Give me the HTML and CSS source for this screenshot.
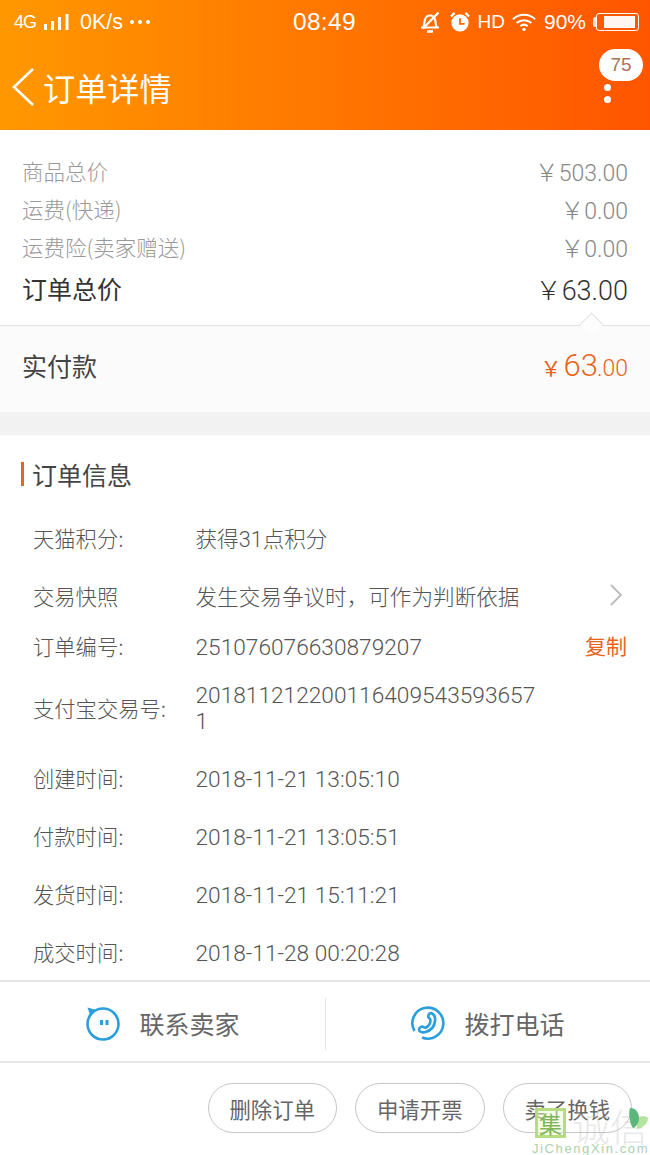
FILE: index.html
```html
<!DOCTYPE html>
<html lang="zh">
<head>
<meta charset="utf-8">
<title>订单详情</title>
<link rel="stylesheet" href="styles.css">
</head>
<body>
<div class="page">
  <header class="header">
    <div class="status">
      <div class="status-left">
        <span class="net">4G</span>
        <svg class="signal" width="26" height="18" viewBox="0 0 26 18"><path d="M1.500 11v6M8.500 8v9M15.500 4v13M23 1v16" stroke="#fff" stroke-width="3" fill="none"/></svg>
        <span class="speed">0K/s</span>
        <span class="dots"><i></i><i></i><i></i></span>
      </div>
      <div class="clock">08:49</div>
      <div class="status-right">
        <svg class="ic-bell" width="20" height="22" viewBox="0 0 20 22" fill="none" stroke="#fff" stroke-width="2.200"><path d="M1 16.500h18M3 16.500c2-3 1-5 2-8 1-3 3-4 5-4s4 1 5 4c1 3 0 5 2 8"/><path d="M7 20.500h6" stroke-width="2.500"/><path d="M18.500 1.500 3 17.500"/></svg>
        <svg class="ic-alarm" width="20" height="20" viewBox="0 0 22 22"><circle cx="11" cy="12" r="9.500" fill="#fff"/><path d="M11 7v6h5" stroke="#f60" stroke-width="2" fill="none"/><path d="M1 5l4-4M21 5l-4-4" stroke="#fff" stroke-width="2.500"/></svg>
        <span class="hd">HD</span>
        <svg class="ic-wifi" width="24" height="19" viewBox="0 0 26 20" fill="none" stroke="#fff" stroke-width="2.300"><path d="M1 6.500c7-6.500 17-6.500 24 0M5 10.500c4.500-4 11.500-4 16 0M9 14c2.500-2 5.500-2 8 0"/><circle cx="13" cy="17.500" r="1.800" fill="#fff" stroke="none"/></svg>
        <span class="pct">90%</span>
        <span class="battery-tip"></span>
        <span class="battery"><span class="battery-fill"></span></span>
      </div>
    </div>
    <div class="titlebar">
      <svg class="back" width="24" height="40" viewBox="0 0 24 40"><path d="M22 2 3 20l19 18" fill="none" stroke="#fff" stroke-width="2.600"/></svg>
      <h1 class="title">订单详情</h1>
      <div class="more">
        <span class="badge">75</span>
        <i></i><i></i>
      </div>
    </div>
  </header>

  <section class="prices">
    <div class="price-row"><span class="lbl">商品总价</span><span class="num"><span class="yen">￥</span>503.00</span></div>
    <div class="price-row"><span class="lbl">运费(快递)</span><span class="num"><span class="yen">￥</span>0.00</span></div>
    <div class="price-row"><span class="lbl">运费险(卖家赠送)</span><span class="num"><span class="yen">￥</span>0.00</span></div>
    <div class="price-row total"><span class="lbl">订单总价</span><span class="num"><span class="yen">￥</span>63.00</span></div>
  </section>

  <section class="paid">
    <span class="notch"></span>
    <span class="paid-label">实付款</span>
    <span class="paid-num"><small>￥</small><b>63</b><small>.00</small></span>
  </section>

  <section class="info">
    <h2 class="info-title">订单信息</h2>
    <div class="row"><span class="key">天猫积分:</span><span class="val">获得31点积分</span></div>
    <div class="row"><span class="key">交易快照</span><span class="val">发生交易争议时，可作为判断依据</span>
      <svg class="chev" width="14" height="22" viewBox="0 0 14 22"><path d="M2 1l10 10L2 21" fill="none" stroke="#bbb" stroke-width="1.800"/></svg>
    </div>
    <div class="row row-short"><span class="key">订单编号:</span><span class="val val-digits">251076076630879207</span><span class="copy">复制</span></div>
    <div class="row row-tall"><span class="key">支付宝交易号:</span><span class="val val-digits val-wrap">2018112122001164095435936571</span></div>
    <div class="row"><span class="key">创建时间:</span><span class="val val-digits">2018-11-21 13:05:10</span></div>
    <div class="row"><span class="key">付款时间:</span><span class="val val-digits">2018-11-21 13:05:51</span></div>
    <div class="row"><span class="key">发货时间:</span><span class="val val-digits">2018-11-21 15:11:21</span></div>
    <div class="row"><span class="key">成交时间:</span><span class="val val-digits">2018-11-28 00:20:28</span></div>
  </section>

  <section class="contact">
    <div class="contact-item">
      <svg width="36" height="36" viewBox="0 0 36 36" fill="none" stroke="#2a9fdc" stroke-width="2.600"><circle cx="18" cy="19" r="15.500"/><path d="M2.500 2.500l9 2.500-6 6z" fill="#2a9fdc" stroke="none"/><path d="M16.500 15v5M22 15v5" stroke-width="3"/></svg>
      <span>联系卖家</span>
    </div>
    <div class="contact-item with-line">
      <svg width="36" height="36" viewBox="0 0 36 36" fill="none" stroke="#2a9fdc" stroke-width="2.600"><path d="M4.500 26A15.500 15.500 0 1 1 12 32.500"/><path d="M21 8c3 1 4.500 4 4 8-.5 5-4 9.500-9.500 11-3.500 1-6.500-.5-6.500-2.500s3-3.500 4.500-2.500c1 .7 1.500 1 2.500.5 3-1.500 4.500-5 4.500-7.500 0-1-.5-1.300-1.500-2-1.500-1.200-.5-5 2-5z"/></svg>
      <span>拨打电话</span>
    </div>
  </section>

  <section class="actions">
    <button class="btn">删除订单</button>
    <button class="btn">申请开票</button>
    <button class="btn">卖了换钱</button>
  </section>

  <div class="watermark">
    <span class="wm-box">集</span>
    <span class="wm-name">诚信</span>
    <svg class="wm-leaf" width="22" height="24" viewBox="0 0 22 24"><path d="M9 12c2-4 8-5 11-2 0 5-5 10-11 11z" fill="#b5e3a0"/><path d="M2 0c6 0 9 5 9 10s-3 9-6 10C2 17 0 5 2 0z" fill="#5bb77a"/></svg>
    <span class="wm-url">JiChengXin.com</span>
  </div>
</div>
</body>
</html>
```
FILE: styles.css
```css
* { box-sizing: border-box; }
html, body { margin: 0; padding: 0; }
body {
  width: 650px;
  height: 1155px;
  overflow: hidden;
  background: #fff;
  font-family: "Liberation Sans", "Noto Sans CJK SC", sans-serif;
  color: #666;
}
.page { position: relative; width: 650px; height: 1155px; overflow: hidden; background: #f2f2f2; display: flex; flex-direction: column; }

.header { height: 130px; flex: none; background: linear-gradient(90deg, #ff9800 0%, #ff7a00 45%, #ff5500 100%); color: #fff; }
.status { height: 44px; display: flex; align-items: center; padding: 0 11px 0 14px; }
.status-left { display: flex; align-items: center; width: 279px; flex: none; }
.net { font-size: 18px; width: 30px; letter-spacing: -1px; }
.speed { font-size: 21.500px; margin-left: 10px; }
.dots { display: flex; gap: 4px; margin-left: 7px; }
.dots i { width: 4px; height: 4px; border-radius: 50%; background: #fff; display: block; }
.clock { font-size: 24.500px; letter-spacing: .3px; }
.status-right { display: flex; align-items: center; margin-left: auto; }
.ic-alarm { margin-left: 10px; }
.hd { font-size: 19px; margin-left: 8px; }
.ic-wifi { margin-left: 7px; }
.pct { font-size: 21px; margin-left: 8px; }
.battery-tip { width: 3px; height: 10px; background: #fff; opacity: .8; border-radius: 2px 0 0 2px; margin-left: 7px; }
.battery { width: 43px; height: 18px; border: 1.500px solid #fff; border-radius: 3px; padding: 2px 3px; display: flex; justify-content: flex-end; opacity: .95; }
.battery-fill { display: block; width: 31px; height: 100%; background: #fff; }

.titlebar { height: 86px; display: flex; align-items: center; padding: 0 0 0 11px; }
.back { margin-right: 9px; }
.title { margin: 0 0 0 -1px; font-size: 32.200px; font-weight: 400; font-family: "Noto Sans CJK SC", sans-serif; line-height: 1; }
.more { margin-left: auto; width: 14px; margin-right: 36px; display: flex; flex-direction: column; align-items: center; gap: 5px; position: relative; height: 86px; padding-top: 40px; }
.more i { width: 7px; height: 7px; border-radius: 50%; background: #fff; display: block; flex: none; }
.badge { position: absolute; top: 5px; left: -1px; width: 44px; height: 32px; border-radius: 16px; background: #fff; color: #b0715a; font-size: 19px; line-height: 32px; text-align: center; }

.prices { padding: 23px 22px 0; height: 196px; flex: none; background: #fff; border-bottom: 1px solid #e2e2e2; }
.price-row { display: flex; justify-content: space-between; align-items: center; height: 38px; font-size: 21.500px; color: #999; font-family: "Noto Sans CJK SC", sans-serif; font-weight: 300; }
.lbl { padding-bottom: 4px; }
.price-row .num { font-family: "Roboto", sans-serif; font-size: 23px; font-weight: 300; color: #888; padding-bottom: 4px; }
.price-row .yen { font-size: 24px; font-family: "Noto Sans CJK SC", sans-serif; }
.price-row.total { height: 46px; font-size: 25px; color: #333; font-weight: 400; }
.price-row.total .num { font-size: 27px; color: #333; }
.price-row.total .yen { font-size: 26px; }

.paid { position: relative; height: 86px; flex: none; background: #fbfbfb; display: flex; justify-content: space-between; align-items: center; padding: 0 22px 6px; }
.notch { position: absolute; top: -10px; right: 50px; width: 17px; height: 17px; transform: rotate(45deg); background: #fdfdfd; border-left: 1px solid #e2e2e2; border-top: 1px solid #e2e2e2; }
.paid-label { font-size: 25px; color: #444; font-family: "Noto Sans CJK SC", sans-serif; padding-bottom: 2px; }
.paid-num { color: #e8641c; font-family: "Roboto", sans-serif; font-weight: 300; display: flex; align-items: baseline; padding-bottom: 2px; }
.paid-num small { font-size: 23px; }
.paid-num small:first-child { font-size: 21px; font-family: "Noto Sans CJK SC", sans-serif; font-weight: 400; margin-right: 2px; }
.paid-num b { font-size: 31px; font-weight: 300; margin-right: -1px; }

.info { flex: 1; min-height: 0; overflow: hidden; margin-top: 23px; background: #fff; padding-left: 33px; padding-top: 1px; position: relative; }
.info-title { position: relative; margin: 0 0 0 -1px; padding-top: 24px; line-height: 28px; height: 72px; font-size: 25px; font-weight: 400; color: #444; font-family: "Noto Sans CJK SC", sans-serif; }
.info-title::before { content: ""; position: absolute; left: -11px; top: 26px; width: 3px; height: 24px; background: #e8641c; }
.row { display: flex; align-items: center; height: 58px; position: relative; }
.key { width: 162.500px; flex: none; font-family: "Noto Sans CJK SC", sans-serif; font-weight: 300; color: #555; font-size: 21.300px; }
.val { color: #555; font-family: "Roboto", "Noto Sans CJK SC", sans-serif; font-weight: 300; font-size: 21.600px; }
.val-digits { font-size: 22.700px; padding-top: 4px; }
.val-wrap { width: 345px; line-height: 26px; word-break: break-all; }
.row-short { height: 42px; }
.row-tall { height: 82px; }
.chev { position: absolute; right: 27px; top: 18px; }
.copy { position: absolute; right: 23px; color: #e8641c; font-size: 21px; }

.contact { height: 83px; flex: none; border-top: 2px solid #e6e6e6; border-bottom: 2px solid #e6e6e6; display: flex; background: #fff; }
.contact-item { flex: 1; display: flex; align-items: center; justify-content: center; gap: 18px; padding-top: 3px; font-size: 25px; color: #666; font-family: "Noto Sans CJK SC", sans-serif; position: relative; }
.with-line::before { content: ""; position: absolute; left: 0; top: 16px; height: 52px; width: 1px; background: #e2e2e2; }

.actions { height: 92px; flex: none; display: flex; justify-content: flex-end; gap: 18px; padding: 20px 18px 0 0; background: #fff; }
.btn { width: 129.500px; height: 50px; border: 1px solid #c6c6c6; border-radius: 25px; background: #fff; font-size: 21.400px; color: #666; padding: 0; font-family: "Noto Sans CJK SC", sans-serif; }

.watermark { position: absolute; left: 532px; top: 1106px; width: 118px; height: 49px; }
.wm-box { position: absolute; left: 3px; top: 2px; width: 31px; height: 30px; border: 3px solid #b7dc80; background: rgba(235,250,205,.5); color: #7fb65a; font-size: 23px; line-height: 24px; text-align: center; font-family: "Noto Sans CJK SC", sans-serif; }
.wm-name { position: absolute; left: 40px; top: -1px; font-size: 38px; line-height: 40px; color: rgba(195,195,195,.4); font-weight: 300; font-family: "Noto Sans CJK SC", sans-serif; }
.wm-leaf { position: absolute; left: 96px; top: 2px; }
.wm-url { position: absolute; left: 0; top: 35px; font-size: 13px; letter-spacing: 1.600px; color: #a9d3ae; white-space: nowrap; }
```
